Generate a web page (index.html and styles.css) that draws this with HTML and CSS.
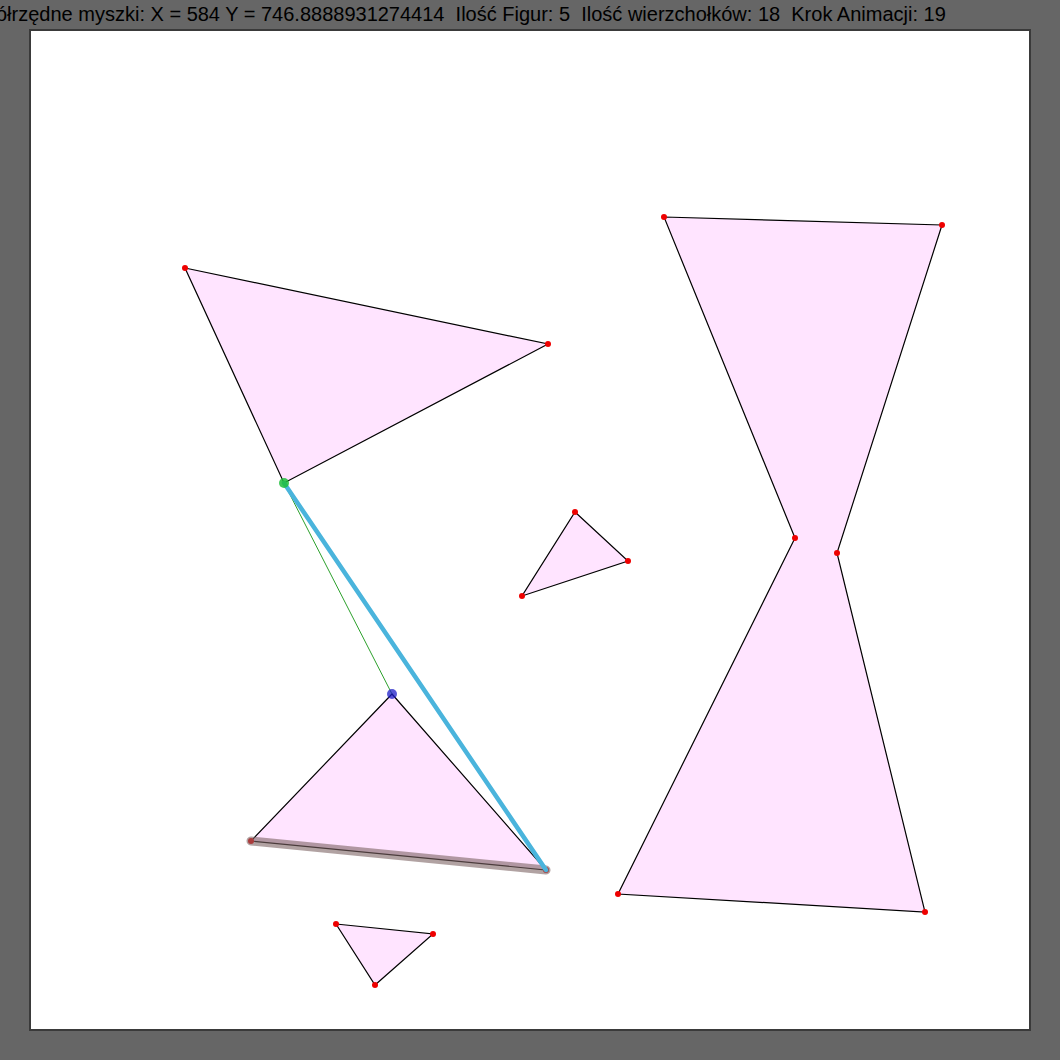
FILE: index.html
```html
<!DOCTYPE html>
<html>
<head>
<meta charset="utf-8">
<link rel="stylesheet" href="styles.css">
</head>
<body>
<div class="status">Współrzędne myszki: X = 584 Y = 746.8888931274414  Ilość Figur: 5  Ilość wierzchołków: 18  Krok Animacji: 19</div>
<div class="board">
<svg class="canvas" width="998" height="998" viewBox="31 31 998 998" xmlns="http://www.w3.org/2000/svg">
  <g class="shape">
    <polygon points="185,268 548,344 284,483"/>
    <polygon points="575,512 628,561 522,596"/>
    <polygon points="664,217 942,225 837,553 925,912 618,894 795,538"/>
    <polygon points="392,694 546,870 251,841"/>
    <polygon points="336,924 433,934 375,985"/>
  </g>
  <g class="dots">
    <circle cx="185" cy="268" r="3"/>
    <circle cx="548" cy="344" r="3"/>
    <circle cx="575" cy="512" r="3"/>
    <circle cx="628" cy="561" r="3"/>
    <circle cx="522" cy="596" r="3"/>
    <circle cx="664" cy="217" r="3"/>
    <circle cx="942" cy="225" r="3"/>
    <circle cx="837" cy="553" r="3"/>
    <circle cx="925" cy="912" r="3"/>
    <circle cx="618" cy="894" r="3"/>
    <circle cx="795" cy="538" r="3"/>
    <circle cx="336" cy="924" r="3"/>
    <circle cx="433" cy="934" r="3"/>
    <circle cx="375" cy="985" r="3"/>
    <circle cx="251" cy="841" r="3"/>
    <circle cx="546" cy="870" r="3"/>
  </g>
  <line class="edge" x1="251" y1="841" x2="546" y2="870"/>
  <line class="green" x1="284" y1="483" x2="392" y2="694"/>
  <line class="blue" x1="284" y1="483" x2="546" y2="870"/>
  <circle class="gdot" cx="284" cy="483" r="5"/>
  <circle class="bdot" cx="392" cy="694" r="5"/>
</svg>
</div>
</body>
</html>
```
FILE: styles.css
```css
html, body {
  margin: 0;
  padding: 0;
  background: #666666;
}
body {
  width: 1060px;
  height: 1060px;
  overflow: hidden;
}
.status {
  height: 29px;
  margin-left: -44px;
  white-space: pre;
  font-family: "Liberation Sans", Arial, sans-serif;
  font-size: 20px;
  line-height: 28px;
  color: #000000;
}
.board {
  margin-left: 29px;
  width: 998px;
  height: 998px;
  border: 2px solid #3a3a3a;
  background: #ffffff;
}
.canvas {
  display: block;
}
.shape polygon {
  fill: #ffe4ff;
  stroke: #000000;
  stroke-width: 1.2;
  stroke-linejoin: miter;
}
.dots circle {
  fill: #ee0000;
}
.edge {
  stroke: rgba(125, 100, 100, 0.6);
  stroke-width: 9;
  stroke-linecap: round;
}
.green {
  stroke: #2ca02c;
  stroke-width: 1;
}
.blue {
  stroke: #4ab4dc;
  stroke-width: 4.5;
  stroke-linecap: round;
}
.gdot {
  fill: rgba(30, 190, 60, 0.85);
}
.bdot {
  fill: rgba(30, 30, 200, 0.75);
}
```
